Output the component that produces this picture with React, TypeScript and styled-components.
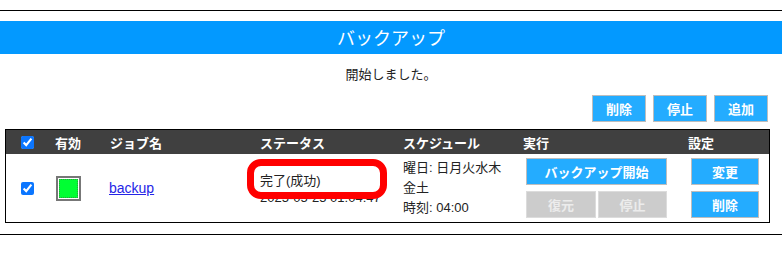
import React from "react";
import styled, { createGlobalStyle } from "styled-components";

const Global = createGlobalStyle`
  html, body { margin: 0; padding: 0; background: #fff; }
  body {
    font-family: "Liberation Sans", "Noto Sans CJK JP", sans-serif;
    font-size: 13px;
    color: #222;
  }
`;

const Page = styled.div`
  width: 782px;
  padding-top: 10px;
`;

const Rule = styled.div<{ $top?: number }>`
  border-top: 1px solid #000;
  margin-top: ${(p) => p.$top ?? 0}px;
`;

const TitleBar = styled.div`
  margin-top: 10px;
  height: 33px;
  line-height: 33px;
  background: #0399ff;
  color: #fff;
  text-align: center;
  font-family: "Noto Sans CJK JP", sans-serif;
  font-size: 18px;
`;

const Message = styled.div`
  padding-top: 10px;
  line-height: 19px;
  text-align: center;
  font-family: "Noto Sans CJK JP", sans-serif;
  font-size: 13px;
`;

const Toolbar = styled.div`
  margin-top: 12px;
  padding-right: 14px;
  display: flex;
  justify-content: flex-end;
  gap: 7px;
`;

const Btn = styled.button<{ $w: number; $disabled?: boolean }>`
  box-sizing: border-box;
  width: ${(p) => p.$w}px;
  height: 27px;
  margin: 0;
  padding: 0;
  border: 1px solid ${(p) => (p.$disabled ? "#dcdcdc" : "#bdbdbd")};
  background: ${(p) => (p.$disabled ? "#cccccc" : "#24acff")};
  color: ${(p) => (p.$disabled ? "#ececec" : "#fff")};
  font-family: "Noto Sans CJK JP", sans-serif;
  font-weight: 700;
  font-size: 13px;
  line-height: 25px;
  cursor: pointer;
`;

const Table = styled.div`
  margin: 7px 0 0 5px;
  width: 765px;
  box-sizing: border-box;
  border: 1px solid #000;
`;

const Row = styled.div<{ $head?: boolean }>`
  display: grid;
  grid-template-columns: 44px 55px 150px 143px 120px 165px 1fr;
  height: ${(p) => (p.$head ? 24 : 68)}px;
  background: ${(p) => (p.$head ? "#404040" : "#fff")};
  color: ${(p) => (p.$head ? "#fff" : "#222")};
  font-family: "Noto Sans CJK JP", sans-serif;
  font-weight: ${(p) => (p.$head ? 700 : 400)};
  font-size: 13px;
`;

const Cell = styled.div<{ $center?: boolean }>`
  position: relative;
  display: flex;
  flex-direction: column;
  justify-content: center;
  align-items: ${(p) => (p.$center ? "center" : "flex-start")};
  padding-left: ${(p) => (p.$center ? 0 : 5)}px;
`;

const Check = styled.input.attrs({ type: "checkbox" })`
  width: 13px;
  height: 13px;
  margin: 0 0 0 -1px;
  accent-color: #0b76ff;
`;

const ColorBox = styled.div`
  box-sizing: border-box;
  width: 25px;
  height: 25px;
  margin-left: 1px;
  border: 2px solid #777;
  padding: 1px;
`;

const ColorFill = styled.div`
  box-sizing: border-box;
  width: 100%;
  height: 100%;
  background: #00ff33;
  border: 1px dotted #2c9a3c;
`;

const JobLink = styled.a`
  font-family: "Liberation Sans", sans-serif;
  font-size: 14px;
  color: #2424e6;
  text-decoration: underline;
  margin-left: -1px;
`;

const Lines = styled.div<{ $lh: number; $shift?: number }>`
  line-height: ${(p) => p.$lh}px;
  padding-top: ${(p) => p.$shift ?? 0}px;
  font-family: "Liberation Sans", "Noto Sans CJK JP", sans-serif;
  white-space: nowrap;
`;

const Highlight = styled.div`
  position: absolute;
  left: -8px;
  top: 5px;
  width: 140px;
  height: 40px;
  box-sizing: border-box;
  border: 7px solid #ff0000;
  border-radius: 14px;
  pointer-events: none;
`;

const BtnStack = styled.div`
  display: flex;
  flex-direction: column;
  gap: 6px;
  margin-left: 3px;
`;

const BtnPair = styled.div`
  display: flex;
  gap: 2px;
`;

export default function App() {
  return (
    <>
      <Global />
      <Page>
        <Rule />
        <TitleBar>バックアップ</TitleBar>
        <Message>開始しました。</Message>
        <Toolbar>
          <Btn $w={54}>削除</Btn>
          <Btn $w={54}>停止</Btn>
          <Btn $w={54}>追加</Btn>
        </Toolbar>
        <Table>
          <Row $head>
            <Cell $center>
              <Check defaultChecked />
            </Cell>
            <Cell>有効</Cell>
            <Cell>ジョブ名</Cell>
            <Cell>ステータス</Cell>
            <Cell>スケジュール</Cell>
            <Cell>実行</Cell>
            <Cell>設定</Cell>
          </Row>
          <Row>
            <Cell $center>
              <Check defaultChecked />
            </Cell>
            <Cell>
              <ColorBox>
                <ColorFill />
              </ColorBox>
            </Cell>
            <Cell>
              <JobLink href="#">backup</JobLink>
            </Cell>
            <Cell>
              <Lines $lh={17} $shift={2}>
                <div>完了(成功)</div>
                <div>2025-05-25 01:04:47</div>
              </Lines>
              <Highlight />
            </Cell>
            <Cell>
              <Lines $lh={20}>
                <div>曜日: 日月火水木</div>
                <div>金土</div>
                <div>時刻: 04:00</div>
              </Lines>
            </Cell>
            <Cell>
              <BtnStack>
                <Btn $w={141}>バックアップ開始</Btn>
                <BtnPair>
                  <Btn $w={70} $disabled>
                    復元
                  </Btn>
                  <Btn $w={69} $disabled>
                    停止
                  </Btn>
                </BtnPair>
              </BtnStack>
            </Cell>
            <Cell>
              <BtnStack>
                <Btn $w={68}>変更</Btn>
                <Btn $w={68}>削除</Btn>
              </BtnStack>
            </Cell>
          </Row>
        </Table>
        <Rule $top={11} />
      </Page>
    </>
  );
}
